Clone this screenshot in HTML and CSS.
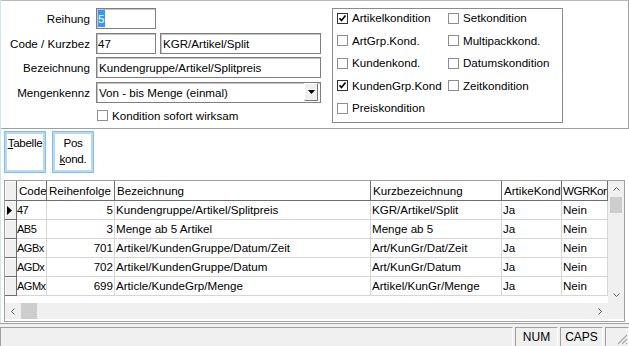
FILE: index.html
```html
<!DOCTYPE html>
<html lang="de">
<head>
    <meta charset="UTF-8">
    <meta name="viewport" content="width=device-width, initial-scale=1.0">
    <title>Konditionen</title>
    <link rel="stylesheet" href="styles.css">
</head>
<body>
<div class="fenster">
    <div class="kopf">
        <form class="maske">
            <label class="lbl">Reihung</label>
            <div class="feld"><span class="eingabe kurz"><span class="markiert">5</span></span></div>

            <label class="lbl">Code / Kurzbez</label>
            <div class="feld">
                <span class="eingabe kurz">47</span>
                <span class="eingabe mittel">KGR/Artikel/Split</span>
            </div>

            <label class="lbl">Bezeichnung</label>
            <div class="feld"><span class="eingabe lang">Kundengruppe/Artikel/Splitpreis</span></div>

            <label class="lbl">Mengenkennz</label>
            <div class="feld">
                <span class="eingabe lang auswahl">
                    <span>Von - bis Menge (einmal)</span>
                    <span class="knopf-ab"><svg width="7" height="4" viewBox="0 0 7 4"><path d="M0 0h7L3.5 4z" fill="#000"/></svg></span>
                </span>
            </div>

            <span></span>
            <div class="haken"><span class="box"></span>Kondition sofort wirksam</div>
        </form>

        <div class="gruppe">
            <div class="option"><span class="box an"><svg width="9" height="9" viewBox="0 0 9 9"><path d="M1.5 4.2l2 2.2 4-5" fill="none" stroke="#000" stroke-width="1.6"/></svg></span>Artikelkondition</div>
            <div class="option"><span class="box"></span>Setkondition</div>
            <div class="option"><span class="box"></span>ArtGrp.Kond.</div>
            <div class="option"><span class="box"></span>Multipackkond.</div>
            <div class="option"><span class="box"></span>Kundenkond.</div>
            <div class="option"><span class="box"></span>Datumskondition</div>
            <div class="option"><span class="box an"><svg width="9" height="9" viewBox="0 0 9 9"><path d="M1.5 4.2l2 2.2 4-5" fill="none" stroke="#000" stroke-width="1.6"/></svg></span>KundenGrp.Kond</div>
            <div class="option"><span class="box"></span>Zeitkondition</div>
            <div class="option"><span class="box"></span>Preiskondition</div>
        </div>
    </div>

    <div class="knopfleiste">
        <button class="knopf" type="button"><span><u>T</u>abelle</span></button>
        <button class="knopf" type="button"><span>Pos</span><span><u>k</u>ond.</span></button>
    </div>

    <div class="liste">
        <div class="daten">
            <div class="kopfzeile">
                <div class="ind"></div>
                <div>Code</div>
                <div>Reihenfolge</div>
                <div>Bezeichnung</div>
                <div>Kurzbezeichnung</div>
                <div>ArtikeKond</div>
                <div class="eng">WGRKon</div>
            </div>
            <div class="zeile">
                <div class="ind"><svg width="5" height="9" viewBox="0 0 5 9"><path d="M0 0l5 4.5L0 9z" fill="#000"/></svg></div>
                <div class="code">47</div>
                <div class="zahl">5</div>
                <div>Kundengruppe/Artikel/Splitpreis</div>
                <div>KGR/Artikel/Split</div>
                <div>Ja</div>
                <div>Nein</div>
            </div>
            <div class="zeile">
                <div class="ind"></div>
                <div class="code">AB5</div>
                <div class="zahl">3</div>
                <div>Menge ab 5 Artikel</div>
                <div>Menge ab 5</div>
                <div>Ja</div>
                <div>Nein</div>
            </div>
            <div class="zeile">
                <div class="ind"></div>
                <div class="code">AGBx</div>
                <div class="zahl">701</div>
                <div>Artikel/KundenGruppe/Datum/Zeit</div>
                <div>Art/KunGr/Dat/Zeit</div>
                <div>Ja</div>
                <div>Nein</div>
            </div>
            <div class="zeile">
                <div class="ind"></div>
                <div class="code">AGDx</div>
                <div class="zahl">702</div>
                <div>Artikel/KundenGruppe/Datum</div>
                <div>Art/KunGr/Datum</div>
                <div>Ja</div>
                <div>Nein</div>
            </div>
            <div class="zeile">
                <div class="ind"></div>
                <div class="code">AGMx</div>
                <div class="zahl">699</div>
                <div>Article/KundeGrp/Menge</div>
                <div>Artikel/KunGr/Menge</div>
                <div>Ja</div>
                <div>Nein</div>
            </div>
        </div>

        <div class="vscroll">
            <span class="sknopf"><svg width="7" height="4" viewBox="0 0 7 4"><path d="M0.5 3.5l3-3 3 3" fill="none" stroke="#606060"/></svg></span>
            <span class="daumen"></span>
            <span class="spur"></span>
            <span class="sknopf"><svg width="7" height="4" viewBox="0 0 7 4"><path d="M0.5 0.5l3 3 3-3" fill="none" stroke="#606060"/></svg></span>
        </div>

        <div class="hscroll">
            <span class="sknopf"><svg width="4" height="7" viewBox="0 0 4 7"><path d="M3.5 0.5l-3 3 3 3" fill="none" stroke="#606060"/></svg></span>
            <span class="daumen"></span>
            <span class="spur"></span>
            <span class="sknopf"><svg width="4" height="7" viewBox="0 0 4 7"><path d="M0.5 0.5l3 3-3 3" fill="none" stroke="#606060"/></svg></span>
        </div>
        <div class="ecke"></div>
    </div>
</div>

<div class="statusleiste">
    <div class="sfeld haupt"></div>
    <div class="sfeld klein">NUM</div>
    <div class="sfeld klein">CAPS</div>
    <div class="sfeld rest"></div>
    <svg class="griff" width="12" height="12" viewBox="0 0 12 12">
        <path d="M11 2L2 11M11 6L6 11M11 10L10 11" stroke="#a8a8a8" stroke-width="1.2"/>
    </svg>
</div>
</body>
</html>
```

FILE: styles.css
```css
* {
    box-sizing: border-box;
}
body {
    margin: 0;
    width: 629px;
    height: 346px;
    overflow: hidden;
    position: relative;
    background: #fff;
    font-family: Tahoma, "Liberation Sans", Arial, sans-serif;
    font-size: 11.6px;
    color: #000;
}
.fenster {
    height: 323px;
    border-left: 1px solid #cfe8ee;
}

/* Kopfbereich */
.kopf {
    display: flex;
    height: 129px;
    border-top: 1px solid #b9b9b9;
    border-bottom: 1px solid #a0a0a0;
    border-right: 1px solid #a0a0a0;
}
.maske {
    display: grid;
    grid-template-columns: 89px 225px;
    grid-template-rows: 21px 21px 21px 21px 18px;
    column-gap: 6px;
    row-gap: 3.67px;
    align-content: start;
    margin: 0;
    padding-top: 7px;
}
.lbl {
    text-align: right;
    line-height: 21px;
    white-space: nowrap;
}
.feld {
    display: flex;
    gap: 4px;
}
.eingabe {
    display: block;
    height: 21px;
    padding: 0 2px;
    line-height: 19px;
    white-space: nowrap;
    overflow: hidden;
    border: 1px solid #7f7f7f;
    box-shadow: inset 1px 1px 0 #c4c4c4;
    background: #fff;
}
.kurz {
    width: 60px;
    padding-left: 1px;
}
.mittel {
    width: 161px;
}
.lang {
    width: 225px;
}
.markiert {
    display: inline-block;
    line-height: 17px;
    margin-top: 1px;
    padding: 0 1px 0 0;
    background: #3399ff;
    color: #fff;
}
.auswahl {
    display: flex;
    justify-content: space-between;
    padding-right: 2px;
}
.knopf-ab {
    display: flex;
    align-items: center;
    justify-content: center;
    width: 14px;
    height: 18px;
    margin-top: 0.5px;
    background: #f0f0f0;
    border: 1px solid #fff;
    border-right-color: #777;
    border-bottom-color: #777;
}
.haken {
    display: flex;
    align-items: center;
    gap: 4px;
    padding-left: 1px;
}
.box {
    display: flex;
    align-items: center;
    justify-content: center;
    width: 11px;
    height: 11px;
    border: 1px solid #8e8e8e;
    background: #fff;
}
.box.an {
    border-color: #333;
}

.gruppe {
    display: grid;
    grid-template-columns: 111px 111px;
    grid-auto-rows: 22.5px;
    align-items: start;
    width: 231px;
    height: 115px;
    margin: 7px 0 0 11px;
    padding-left: 4px;
    border: 1px solid #8c8c8c;
}
.option {
    display: flex;
    align-items: center;
    gap: 4px;
    line-height: 18px;
    white-space: nowrap;
}

/* Knoepfe */
.knopfleiste {
    display: flex;
    gap: 6px;
    padding: 2px 0 0 3px;
}
.knopf {
    display: flex;
    flex-direction: column;
    align-items: center;
    justify-content: flex-start;
    width: 42px;
    height: 42px;
    padding: 3px 0 0;
    font: inherit;
    line-height: 16px;
    letter-spacing: -0.3px;
    color: #000;
    background: #fff;
    border: 1px solid #86bce9;
    box-shadow: inset 0 0 0 2px #b5d9f6;
    overflow: hidden;
}

/* Tabelle */
.liste {
    display: grid;
    grid-template-columns: 603px 16px;
    grid-template-rows: 122px 16px;
    width: 621px;
    height: 142px;
    margin: 7px 0 0 3px;
    border: 1px solid #a0a0a0;
}
.daten {
    overflow: hidden;
}
.kopfzeile,
.zeile {
    display: grid;
    grid-template-columns: 12px 30px 68px 256px 131px 60px 46px;
}
.kopfzeile {
    height: 20px;
}
.zeile {
    height: 19px;
}
.kopfzeile > div {
    padding-left: 2px;
    line-height: 19px;
    white-space: nowrap;
    overflow: hidden;
    border-right: 1px solid #6e6e6e;
    border-bottom: 1px solid #6e6e6e;
}
.kopfzeile > .eng {
    padding-left: 1px;
    letter-spacing: -0.5px;
}
.zeile > div {
    padding: 0 1px;
    line-height: 18px;
    white-space: nowrap;
    overflow: hidden;
    border-right: 1px solid #d6d6d6;
    border-bottom: 1px solid #d6d6d6;
}
.zeile > .code {
    padding: 0;
    font-size: 11px;
    letter-spacing: -0.5px;
}
.zeile > .zahl {
    text-align: right;
}
.kopfzeile > .ind,
.zeile > .ind {
    display: flex;
    align-items: center;
    padding-left: 2px;
    background: #f0f0f0;
    border-right: 1px solid #6e6e6e;
    border-bottom: 1px solid #6e6e6e;
    box-shadow: inset 1px 1px 0 #fff;
}

.vscroll,
.hscroll {
    display: flex;
    background: #f0f0f0;
}
.vscroll {
    flex-direction: column;
    padding: 0 2px;
}
.sknopf {
    display: flex;
    align-items: center;
    justify-content: center;
    flex: 0 0 16px;
}
.daumen {
    flex: 0 0 16px;
    background: #cdcdcd;
}
.spur {
    flex: 1;
}
.ecke {
    background: #f0f0f0;
}

/* Statusleiste */
.statusleiste {
    display: flex;
    gap: 2px;
    height: 23px;
    padding-top: 3px;
    background: #f0f0f0;
    border-top: 1px solid #a0a0a0;
}
.sfeld {
    height: 19px;
    padding-top: 1px;
    font-size: 12px;
    line-height: 16px;
    text-align: center;
    border-left: 1px solid #a0a0a0;
    border-top: 1px solid #a0a0a0;
    border-right: 1px solid #fff;
}
.haupt {
    width: 513px;
}
.klein {
    width: 43px;
}
.rest {
    flex: 1;
}
.griff {
    position: absolute;
    right: 1px;
    bottom: 1px;
}
```
